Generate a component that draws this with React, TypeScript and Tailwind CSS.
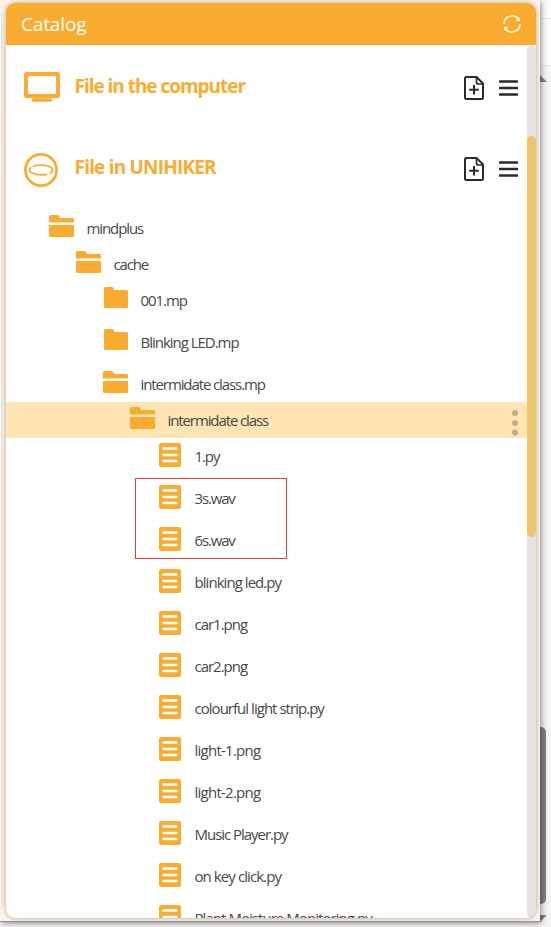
type Kind = 'open' | 'closed' | 'file';
type Node = { name: string; kind: Kind; indent: string; track: string; selected?: boolean };

const nodes: Node[] = [
  { name: 'mindplus', kind: 'open', indent: 'pl-[42px]', track: 'tracking-[-1.1px]' },
  { name: 'cache', kind: 'open', indent: 'pl-[69px]', track: 'tracking-[-1.15px]' },
  { name: '001.mp', kind: 'closed', indent: 'pl-[96px]', track: 'tracking-[-1.05px]' },
  { name: 'Blinking LED.mp', kind: 'closed', indent: 'pl-[96px]', track: 'tracking-[-1.02px]' },
  { name: 'intermidate class.mp', kind: 'open', indent: 'pl-[96px]', track: 'tracking-[-1.1px]' },
  { name: 'intermidate class', kind: 'open', indent: 'pl-[123px]', track: 'tracking-[-1.1px]', selected: true },
  { name: '1.py', kind: 'file', indent: 'pl-[150px]', track: 'tracking-[-1.1px]' },
  { name: '3s.wav', kind: 'file', indent: 'pl-[150px]', track: 'tracking-[-1.15px]' },
  { name: '6s.wav', kind: 'file', indent: 'pl-[150px]', track: 'tracking-[-1.15px]' },
  { name: 'blinking led.py', kind: 'file', indent: 'pl-[150px]', track: 'tracking-[-0.95px]' },
  { name: 'car1.png', kind: 'file', indent: 'pl-[150px]', track: 'tracking-[-1.02px]' },
  { name: 'car2.png', kind: 'file', indent: 'pl-[150px]', track: 'tracking-[-1.02px]' },
  { name: 'colourful light strip.py', kind: 'file', indent: 'pl-[150px]', track: 'tracking-[-0.97px]' },
  { name: 'light-1.png', kind: 'file', indent: 'pl-[150px]', track: 'tracking-[-0.75px]' },
  { name: 'light-2.png', kind: 'file', indent: 'pl-[150px]', track: 'tracking-[-0.75px]' },
  { name: 'Music Player.py', kind: 'file', indent: 'pl-[150px]', track: 'tracking-[-1.03px]' },
  { name: 'on key click.py', kind: 'file', indent: 'pl-[150px]', track: 'tracking-[-0.92px]' },
  { name: 'Plant Moisture Monitoring.py', kind: 'file', indent: 'pl-[150px]', track: 'tracking-[-0.95px]' },
];

function NodeIcon({ kind }: { kind: Kind }) {
  if (kind === 'open')
    return (
      <svg width="27" height="24" viewBox="0 0 27 24" fill="#f9ac30">
        <path d="M1 7.500V1.500Q1 0 2.500 0H9.500Q10.500 0 11 1L12 3H24.500Q26 3 26 4.500V7.500Z" />
        <path d="M1 10H26V20.500Q26 22 24.500 22H2.500Q1 22 1 20.500Z" />
      </svg>
    );
  if (kind === 'closed')
    return (
      <svg width="27" height="24" viewBox="0 0 27 24" fill="#f9ac30">
        <path d="M2 1.500Q2 0 3.500 0H10Q11 0 11.500 1L12.500 3H24.500Q26 3 26 4.500V19.500Q26 21 24.500 21H3.500Q2 21 2 19.500Z" />
      </svg>
    );
  return (
    <svg width="27" height="24" viewBox="0 0 27 24">
      <rect x="3" width="22" height="24" rx="2" fill="#f9ac30" />
      <path d="M7.500 5.500H20.500M7.500 12H20.500M7.500 18H20.500" stroke="#fff" strokeWidth="2.300" strokeLinecap="round" />
    </svg>
  );
}

function TreeRow({ node }: { node: Node }) {
  return (
    <div
      className={`flex h-9 shrink-0 ${node.indent} ${node.kind === 'open' ? '' : 'mb-1.5'} ${node.selected ? 'bg-[#ffe4b4]' : ''}`}
    >
      <span className="w-[38.5px] shrink-0 pt-[5px]">
        <NodeIcon kind={node.kind} />
      </span>
      <span className={`whitespace-nowrap text-[15px] leading-[37px] text-[#484848] ${node.track}`}>{node.name}</span>
      {node.selected && (
        <svg className="ml-auto mr-[9px]" width="6" height="36" viewBox="0 0 6 36" fill="#c2ad86">
          <circle cx="3" cy="11" r="3" />
          <circle cx="3" cy="21" r="3" />
          <circle cx="3" cy="30.500" r="3" />
        </svg>
      )}
    </div>
  );
}

function SectionTools() {
  return (
    <div className="ml-auto mr-[9px] flex gap-[15px] pt-[31px]">
      <svg width="20" height="24" viewBox="0 0 20 24" fill="none" stroke="#2b2b2b" strokeWidth="2" strokeLinecap="round" strokeLinejoin="round">
        <path d="M2.500 1H12.500L19 7.500V21.500Q19 23 17.500 23H2.500Q1 23 1 21.500V2.500Q1 1 2.500 1Z" />
        <path d="M12.500 1.500V6Q12.500 8 14.500 8H18.500" strokeWidth="1.700" />
        <path d="M10 9V18.500M5.200 13.800H14.800" strokeLinecap="butt" />
      </svg>
      <svg width="19" height="24" viewBox="0 0 19 24" stroke="#2b2b2b" strokeWidth="2.600" strokeLinecap="round">
        <path d="M1 5.500H18M1 12H18M1 18.500H18" />
      </svg>
    </div>
  );
}

export default function App() {
  return (
    <div
      className="relative h-[927px] w-[551px] overflow-hidden bg-[#f4f4f4]"
      style={{ fontFamily: '"Open Sans", "Noto Sans", sans-serif' }}
    >
      <svg className="absolute right-0 top-0" width="11" height="927" viewBox="0 0 11 927">
        <path d="M0 0H11V65H0Z" fill="#fafafa" />
        <path d="M0 18.500H11M0 65.500H11" stroke="#e5e5e5" />
        <path d="M0 75L7 82H0Z" fill="#858585" />
        <rect x="-10" y="727" width="16" height="177" rx="5" fill="#818181" />
        <path d="M0 915H7L0 922Z" fill="#818181" />
      </svg>
      <div className="relative h-[922px] w-[540px] border-b border-[#99938e] bg-[#fff4e9] pl-1.5 pt-[3px] shadow-[1px_1px_6px_rgba(0,0,0,0.45)]">
        <div className="absolute left-[-10px] top-[12px] h-[898px] w-[11px] rounded-[5px] bg-white shadow-[0_0_3px_rgba(0,0,0,0.2)]" />
        <div className="relative flex h-[915px] w-[530px] flex-col overflow-hidden rounded-[9px] bg-white shadow-[0_0_5px_rgba(0,0,0,0.35)]">
          <header className="flex h-[42px] shrink-0 items-center justify-between bg-[#f9ac30] pl-[15px] pr-[14px]">
            <h1 className="text-[19px] leading-[42px] tracking-[-0.15px] text-white">Catalog</h1>
            <svg width="20" height="20" viewBox="0 0 20 20" fill="none" stroke="#fff" strokeWidth="1.500">
              <path d="M2 10A8 8 0 0 1 16.500 5.300M18 10A8 8 0 0 1 3.500 14.700" />
              <path d="M18.300 3.500L17.700 7.500L13.500 6.500ZM1.700 16.500L2.300 12.500L6.500 13.500Z" fill="#fff" stroke="none" />
            </svg>
          </header>
          <div className="flex min-h-0 flex-1">
            <main className="flex w-[521px] flex-col overflow-hidden">
              <section className="flex h-[81px] shrink-0 pl-[18px]">
                <svg className="mt-[27px]" width="36" height="31" viewBox="0 0 36 31">
                  <rect x="2" y="2" width="32" height="22" rx="0.800" fill="none" stroke="#f9ac30" strokeWidth="4" strokeLinejoin="round" />
                  <path d="M9.500 28H26.500" stroke="#f9ac30" strokeWidth="3.600" strokeLinecap="round" />
                </svg>
                <h2 className="ml-[14.5px] mt-[26px] whitespace-nowrap text-[19px] font-bold leading-[30px] tracking-[-1.03px] text-[#f9ac30]">File in the computer</h2>
                <SectionTools />
              </section>
              <section className="flex h-[84px] shrink-0 pl-[18px]">
                <svg className="mt-[27px]" width="36" height="34" viewBox="0 0 36 34" fill="none" stroke="#f9ac30">
                  <circle cx="17" cy="17" r="15.600" strokeWidth="2.700" />
                  <path
                    d="M9.500 13.300C14 11.500 22 11.700 26 13.700C29.500 15.500 29.500 18 26.300 20M22.500 21.300C17.500 22.300 11 21.700 7.500 19.700C5 18.300 4.800 16.300 6.800 14.800"
                    strokeWidth="1.700"
                    strokeLinecap="round"
                  />
                </svg>
                <h2 className="ml-[14.5px] mt-[26px] whitespace-nowrap text-[19px] font-bold leading-[30px] tracking-[-0.8px] text-[#f9ac30]">File in UNIHIKER</h2>
                <SectionTools />
              </section>
              {nodes.map((node) => (
                <TreeRow key={node.name} node={node} />
              ))}
            </main>
            <div className="w-[9px] rounded-[5px] bg-[#e5e4e3] pt-[91px]">
              <div className="h-[401px] rounded-[5px] bg-[#efc66c]" />
            </div>
          </div>
        </div>
        <div className="absolute left-[135px] top-[478px] h-[81px] w-[152px] border border-[#f83838]" />
      </div>
    </div>
  );
}
